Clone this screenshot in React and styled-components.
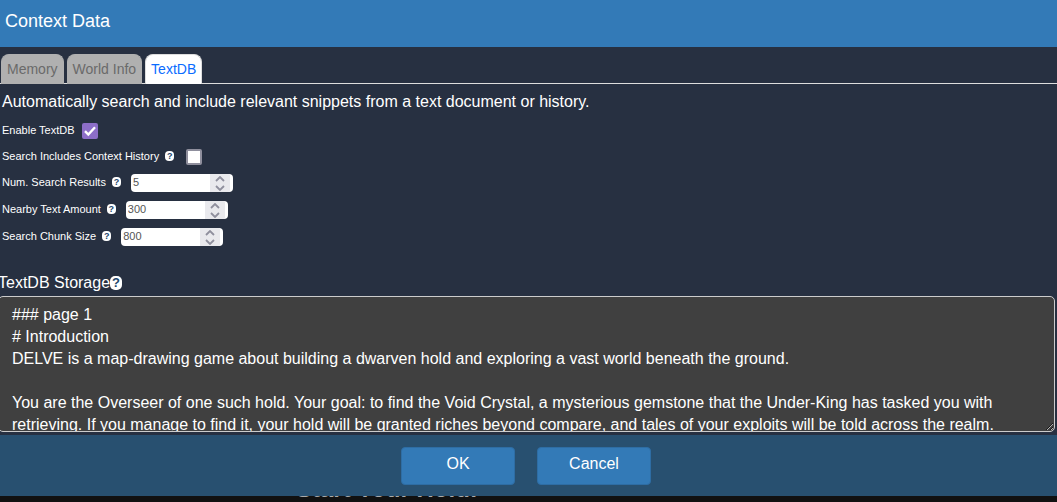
import { useState } from "react";
import styled, { createGlobalStyle } from "styled-components";

const STORAGE_TEXT = `### page 1
# Introduction
DELVE is a map-drawing game about building a dwarven hold and exploring a vast world beneath the ground.

You are the Overseer of one such hold. Your goal: to find the Void Crystal, a mysterious gemstone that the Under-King has tasked you with retrieving. If you manage to find it, your hold will be granted riches beyond compare, and tales of your exploits will be told across the realm.`;

const TABS = ["Memory", "World Info", "TextDB"];

const NumberField = ({ id, label, initial }) => {
  const [value, setValue] = useState(initial);
  const step = (amount) => setValue(Number(value) + amount);

  return (
    <Row>
      <Label htmlFor={id}>{label}</Label>
      <Help type="button" aria-label={`About ${label}`}>
        ?
      </Help>
      <NumberBox>
        <NumberInput
          id={id}
          type="number"
          value={value}
          onChange={(ev) => setValue(ev.target.value)}
        />
        <Stepper>
          <StepButton type="button" aria-label="Increase" onClick={() => step(1)}>
            <svg width="10" height="6" viewBox="0 0 10 6">
              <path d="M1 5 5 1 9 5" />
            </svg>
          </StepButton>
          <StepButton type="button" aria-label="Decrease" onClick={() => step(-1)}>
            <svg width="10" height="6" viewBox="0 0 10 6">
              <path d="M1 1 5 5 9 1" />
            </svg>
          </StepButton>
        </Stepper>
      </NumberBox>
    </Row>
  );
};

const App = () => {
  const [tab, setTab] = useState("TextDB");
  const [enabled, setEnabled] = useState(true);
  const [history, setHistory] = useState(false);
  const [storage, setStorage] = useState(STORAGE_TEXT);

  return (
    <>
      <GlobalStyle />
      <Popup>
        <Title>Context Data</Title>
        <Content>
          <TabList role="tablist">
            {TABS.map((name) => (
              <Tab
                key={name}
                type="button"
                role="tab"
                aria-selected={tab === name}
                $active={tab === name}
                onClick={() => setTab(name)}
              >
                {name}
              </Tab>
            ))}
          </TabList>
          <Intro>
            Automatically search and include relevant snippets from a text
            document or history.
          </Intro>
          <Settings>
            <CheckRow>
              <Label htmlFor="enable">Enable TextDB</Label>
              <Checkbox
                id="enable"
                type="checkbox"
                checked={enabled}
                onChange={() => setEnabled(!enabled)}
              />
            </CheckRow>
            <CheckRow>
              <Label htmlFor="history">Search Includes Context History</Label>
              <Help type="button" aria-label="About context history">
                ?
              </Help>
              <HistoryCheckbox
                id="history"
                type="checkbox"
                checked={history}
                onChange={() => setHistory(!history)}
              />
            </CheckRow>
            <NumberField id="results" label="Num. Search Results" initial={5} />
            <NumberField id="nearby" label="Nearby Text Amount" initial={300} />
            <NumberField id="chunk" label="Search Chunk Size" initial={800} />
          </Settings>
          <StorageHeading>
            <label htmlFor="storage">TextDB Storage</label>
            <LargeHelp type="button" aria-label="About TextDB Storage">
              ?
            </LargeHelp>
          </StorageHeading>
          <Storage
            id="storage"
            spellCheck="false"
            value={storage}
            onChange={(ev) => setStorage(ev.target.value)}
          />
        </Content>
        <Footer>
          <FooterButton type="button">OK</FooterButton>
          <FooterButton type="button">Cancel</FooterButton>
        </Footer>
      </Popup>
      <Backdrop>
        <StoryHeading>Start Your Hold!</StoryHeading>
      </Backdrop>
    </>
  );
};

const GlobalStyle = createGlobalStyle`
  * {
    box-sizing: border-box;
  }

  body {
    margin: 0;
    overflow: hidden;
    background: #111111;
    color: #ffffff;
    font-family: "Liberation Sans", Arial, sans-serif;
    font-size: 16px;
  }

  button,
  input,
  textarea {
    font-family: inherit;
  }
`;

const Popup = styled.div`
  background: #273041;
`;

const Title = styled.div`
  padding: 9px 5px 14px;
  background: #337ab7;
  font-size: 18px;
  line-height: 24px;
`;

const Content = styled.div`
  padding: 7px 2px 3px 0;
`;

const TabList = styled.div`
  display: flex;
  gap: 3px;
  margin-right: -2px;
  padding-left: 1px;
  border-bottom: 1px solid #dddddd;
`;

const Tab = styled.button`
  height: 30px;
  margin-bottom: -1px;
  padding: 0 5px 1px;
  border: 1px solid ${({ $active }) => ($active ? "#dddddd" : "#b0b0b0")};
  border-bottom: 0;
  border-radius: 8px 8px 0 0;
  background: ${({ $active }) => ($active ? "#ffffff" : "#b0b0b0")};
  color: ${({ $active }) => ($active ? "#0a6cff" : "#6a6a6a")};
  font-size: 14px;
  line-height: 20px;
`;

const Intro = styled.div`
  padding: 6px 2px 8px;
  line-height: 24px;
`;

const Settings = styled.div`
  display: flex;
  flex-direction: column;
  gap: 9px;
  padding-left: 2px;
`;

const Row = styled.div`
  display: flex;
  align-items: center;
  height: 18px;
`;

const CheckRow = styled(Row)`
  height: 17px;
`;

const Label = styled.label`
  padding-bottom: 2px;
  font-size: 11px;
  line-height: 16px;
`;

const Help = styled.button`
  width: 9px;
  height: 10px;
  margin: 0 0 2px 6px;
  padding: 0;
  border: 0;
  border-radius: 4px;
  background: #ffffff;
  color: #22466b;
  font-size: 9px;
  font-weight: bold;
  line-height: 10px;
`;

const LargeHelp = styled(Help)`
  width: 12px;
  height: 14px;
  margin: 0;
  border-radius: 5px;
  font-size: 13px;
  line-height: 14px;
`;

const Checkbox = styled.input`
  appearance: none;
  width: 16px;
  height: 16px;
  margin: 1px 0 0 7px;
  border: 2px solid #8f8f9d;
  border-radius: 2px;
  background: #ffffff;

  &:checked {
    border-color: #8d6ec8;
    background: #8d6ec8
      url("data:image/svg+xml,%3Csvg xmlns='http://www.w3.org/2000/svg' viewBox='0 0 12 12'%3E%3Cpath d='M1 6.2 4.3 9.5 11 2.3' fill='none' stroke='white' stroke-width='2.4'/%3E%3C/svg%3E");
  }
`;

const HistoryCheckbox = styled(Checkbox)`
  margin-left: 12px;
`;

const NumberBox = styled.div`
  display: flex;
  width: 102px;
  height: 18px;
  margin-left: 10px;
  overflow: hidden;
  border-radius: 4px;
  background: #ffffff;
`;

const NumberInput = styled.input`
  appearance: textfield;
  flex: 1;
  min-width: 0;
  padding: 0 2px 2px;
  border: 0;
  background: transparent;
  color: #555555;
  font-size: 11px;

  &::-webkit-inner-spin-button {
    display: none;
  }
`;

const Stepper = styled.div`
  display: flex;
  flex-direction: column;
  width: 20px;
  margin-right: 3px;
  background: #e9e9ed;
`;

const StepButton = styled.button`
  display: flex;
  flex: 1;
  align-items: center;
  justify-content: center;
  padding: 0;
  border: 0;
  background: transparent;

  path {
    fill: none;
    stroke: #8f8f9d;
    stroke-width: 1.8;
  }
`;

const StorageHeading = styled.div`
  display: flex;
  align-items: center;
  margin: 25px 0 1px -2px;
  line-height: 24px;
`;

const Storage = styled.textarea`
  display: block;
  width: calc(100% + 2px);
  height: 136px;
  margin-left: -2px;
  padding: 7px 13px;
  overflow: hidden;
  border: 1px solid #cccccc;
  border-radius: 5px;
  background: #404040;
  color: #ffffff;
  font-size: 16px;
  line-height: 22px;
`;

const Footer = styled.div`
  display: flex;
  justify-content: center;
  gap: 22px;
  padding: 12px 5px 11px 0;
  background: #285070;
`;

const FooterButton = styled.button`
  width: 114px;
  height: 38px;
  padding: 0 0 4px;
  border: 1px solid #2e6da4;
  border-radius: 4px;
  background: #337ab7;
  color: #ffffff;
  font-size: 16px;
`;

/* Only the bottom edge of the story heading shows below the popup */
const Backdrop = styled.div`
  height: 6px;
  overflow: hidden;
  background: #111111;
`;

const StoryHeading = styled.h2`
  margin: -19px 0 0 296px;
  color: #aaaaaa;
  font-size: 24px;
  line-height: 24px;
`;

export default App;
